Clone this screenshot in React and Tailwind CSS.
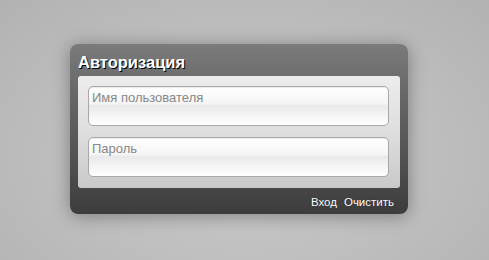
export default function App() {
  return (
    <div
      className="w-[489px] h-[260px] flex items-start justify-start pt-[44px] pl-[70px] bg-[radial-gradient(ellipse_at_50%_60%,#cdcdcd_0%,#c0c0c0_45%,#b2b2b2_100%)]"
      style={{ fontFamily: '"Liberation Sans", Arial, sans-serif' }}
    >
      <div className="w-[338px] h-[170px] rounded-[8px] bg-[linear-gradient(to_bottom,#7b7b7b_0%,#6a6a6a_25%,#505050_70%,#3c3c3c_100%)] shadow-[0_2px_18px_rgba(0,0,0,0.35)] px-[8px] pt-[8px] flex flex-col">
        <div className="h-[24px] flex items-start text-white font-bold text-[16.5px] leading-[21px] [text-shadow:1px_1px_0_#000]">
          Авторизация
        </div>
        <div className="h-[112px] rounded-[3px] bg-[linear-gradient(to_bottom,#ececec_0%,#dedede_50%,#c9c9c9_100%)] px-[10px] pt-[10px] flex flex-col gap-[11px]">
          <Field label="Имя пользователя" />
          <Field label="Пароль" />
        </div>
        <div className="flex justify-end gap-[7px] pr-[6px] pt-[7px] text-white text-[11.5px] leading-[14px] [text-shadow:0_0_1px_rgba(0,0,0,0.5)]">
          <span>Вход</span>
          <span>Очистить</span>
        </div>
      </div>
    </div>
  );
}

function Field({ label }) {
  return (
    <div className="h-[40px] w-[301px] rounded-[5px] border border-[#a8a8a8] bg-[linear-gradient(to_bottom,#ffffff_0%,#f4f4f4_45%,#e9e9e9_48%,#eeeeee_60%,#ffffff_100%)] px-[3px] pt-[2px] text-[13px] leading-[17px] text-[#888888] shadow-[inset_0_1px_1px_rgba(0,0,0,0.08)]">
      {label}
    </div>
  );
}
